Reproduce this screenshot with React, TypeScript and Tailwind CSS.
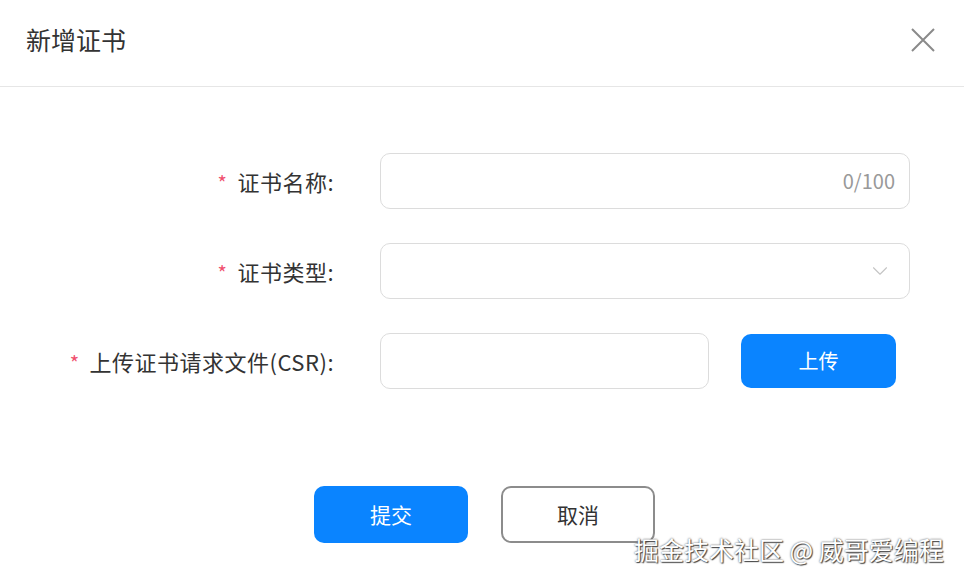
import { ChevronDown } from "lucide-react";

const font = { fontFamily: '"Noto Sans CJK SC", "Liberation Sans", sans-serif' };

function Label({ text }: { text: string }) {
  return (
    <div className="w-[338px] flex items-center justify-end pr-[4px] text-[22px] tracking-[0.5px] text-[#333]">
      <span className="text-[#f0506e] text-[20px] mr-[10px] mt-[4px]">*</span>
      <span>{text}</span>
    </div>
  );
}

export default function App() {
  return (
    <div className="w-[964px] h-[584px] bg-white relative overflow-hidden" style={font}>
      <div className="h-[87px] flex items-center justify-between pl-[26px] pr-[29px] border-b border-[#e6e6e6]">
        <div className="text-[25px] text-[#333] pb-[6px]">新增证书</div>
        <svg width="24" height="24" viewBox="0 0 24 24" className="mb-[6px]">
          <path d="M1 1 L23 23 M23 1 L1 23" stroke="#8a8a8a" strokeWidth="2" fill="none" />
        </svg>
      </div>

      <div className="flex flex-col gap-[34px] pt-[66px]">
        <div className="flex items-center gap-[42px]">
          <Label text="证书名称:" />
          <div className="w-[530px] h-[56px] border border-[#dcdcdc] rounded-[10px] flex items-center justify-end pr-[14px] text-[20px] text-[#999]">
            0/100
          </div>
        </div>
        <div className="flex items-center gap-[42px]">
          <Label text="证书类型:" />
          <div className="w-[530px] h-[56px] border border-[#dcdcdc] rounded-[10px] flex items-center justify-end pr-[16px]">
            <ChevronDown className="w-[26px] h-[26px] text-[#c4c4c4]" strokeWidth={1} />
          </div>
        </div>
        <div className="flex items-center gap-[42px]">
          <Label text="上传证书请求文件(CSR):" />
          <div className="w-[329px] h-[56px] border border-[#dcdcdc] rounded-[10px]" />
          <button className="ml-[-10px] w-[155px] h-[54px] rounded-[10px] bg-[#0a84ff] text-white text-[20px]">上传</button>
        </div>
      </div>

      <div className="flex gap-[33px] pl-[314px] pt-[97px]">
        <button className="w-[154px] h-[57px] rounded-[10px] bg-[#0a84ff] text-white text-[21px]">提交</button>
        <button className="w-[154px] h-[57px] rounded-[10px] border-2 border-[#8c8c8c] text-[#333] text-[21px]">取消</button>
      </div>

      <div
        className="absolute left-[634px] top-[531px] text-[25px] text-white"
        style={{ textShadow: "0 0 2px #444, 1px 1px 1px #444" }}
      >
        掘金技术社区 @ 威哥爱编程
      </div>
    </div>
  );
}
